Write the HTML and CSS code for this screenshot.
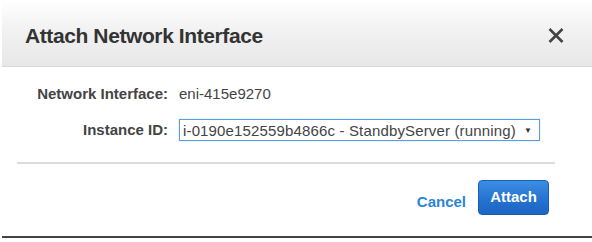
FILE: index.html
```html
<html>

<head>
  <title>Attach Network Interface</title>
  <meta charset="UTF-8">
  <link rel="stylesheet" href="styles.css">
</head>

<body>
  <div class="modal">
    <div class="modal-header">
      <h1 class="modal-title">Attach Network Interface</h1>
      <span class="close">
        <svg width="16" height="15" viewBox="0 0 16 15">
          <path d="M1.5 1 L14.5 14 M14.5 1 L1.5 14" stroke="#444" stroke-width="2.6" fill="none" />
        </svg>
      </span>
    </div>

    <div class="modal-body">
      <div class="form">
        <label class="form-label">Network Interface:</label>
        <div class="form-value">eni-415e9270</div>
        <label class="form-label">Instance ID:</label>
        <div class="select">
          <span class="select-text">i-0190e152559b4866c - StandbyServer (running)</span>
          <span class="select-arrow">&#9660;</span>
        </div>
      </div>
      <hr class="rule">
      <div class="modal-footer">
        <a class="btn-link" href="#">Cancel</a>
        <button class="btn-primary">Attach</button>
      </div>
    </div>
  </div>
</body>

</html>
```

FILE: styles.css
```css
body {
  margin: 0;
  font-family: "Liberation Sans", Arial, sans-serif;
  background: #fff;
}

.modal {
  width: 590px;
  height: 236px;
  margin-left: 2px;
  border-bottom: 2px solid #444;
  background: #fff;
}

.modal-header {
  height: 66px;
  padding: 0 28px 0 23px;
  display: flex;
  align-items: center;
  justify-content: space-between;
  background: linear-gradient(to bottom, #ffffff 0%, #f3f3f3 40%, #e7e7e7 100%);
  border-bottom: 1px solid #d8d8d8;
}

.modal-title {
  margin: 0;
  padding-top: 5px;
  font-size: 21px;
  letter-spacing: -0.4px;
  font-weight: bold;
  color: #333;
}

.close {
  display: flex;
  padding-top: 4px;
}

.modal-body {
  padding: 16px 0 0 15px;
}

.form {
  display: grid;
  grid-template-columns: 151px 361px;
  column-gap: 11px;
  row-gap: 14px;
  align-items: center;
}

.form-label {
  text-align: right;
  font-size: 15px;
  font-weight: bold;
  color: #444;
  line-height: 22px;
}

.form-value {
  font-size: 15px;
  color: #444;
  line-height: 22px;
}

.select {
  height: 22px;
  box-sizing: border-box;
  border: 1px solid #5a9de0;
  box-shadow: 0 0 1px #8bbcec;
  display: flex;
  align-items: center;
  justify-content: space-between;
  padding: 0 7px 0 3px;
  font-size: 15px;
  letter-spacing: 0.15px;
  color: #444;
}

.select-arrow {
  font-size: 8px;
  color: #333;
}

.rule {
  margin: 21px 0 0 0;
  border: 0;
  height: 2px;
  width: 538px;
  background: #dcdcdc;
}

.modal-footer {
  width: 532px;
  display: flex;
  justify-content: flex-end;
  align-items: center;
  gap: 12px;
  padding-top: 16px;
}

.btn-link {
  font-size: 15px;
  font-weight: bold;
  color: #2a84d8;
  text-decoration: none;
  padding-top: 7px;
}

.btn-primary {
  width: 71px;
  height: 35px;
  border: 1px solid #1b5fb3;
  border-radius: 4px;
  background: linear-gradient(to bottom, #3b8de3 0%, #2471cf 60%, #1c64c2 100%);
  color: #fff;
  font-family: "Liberation Sans", Arial, sans-serif;
  font-size: 15px;
  font-weight: bold;
  padding: 0 0 3px 0;
}
```
